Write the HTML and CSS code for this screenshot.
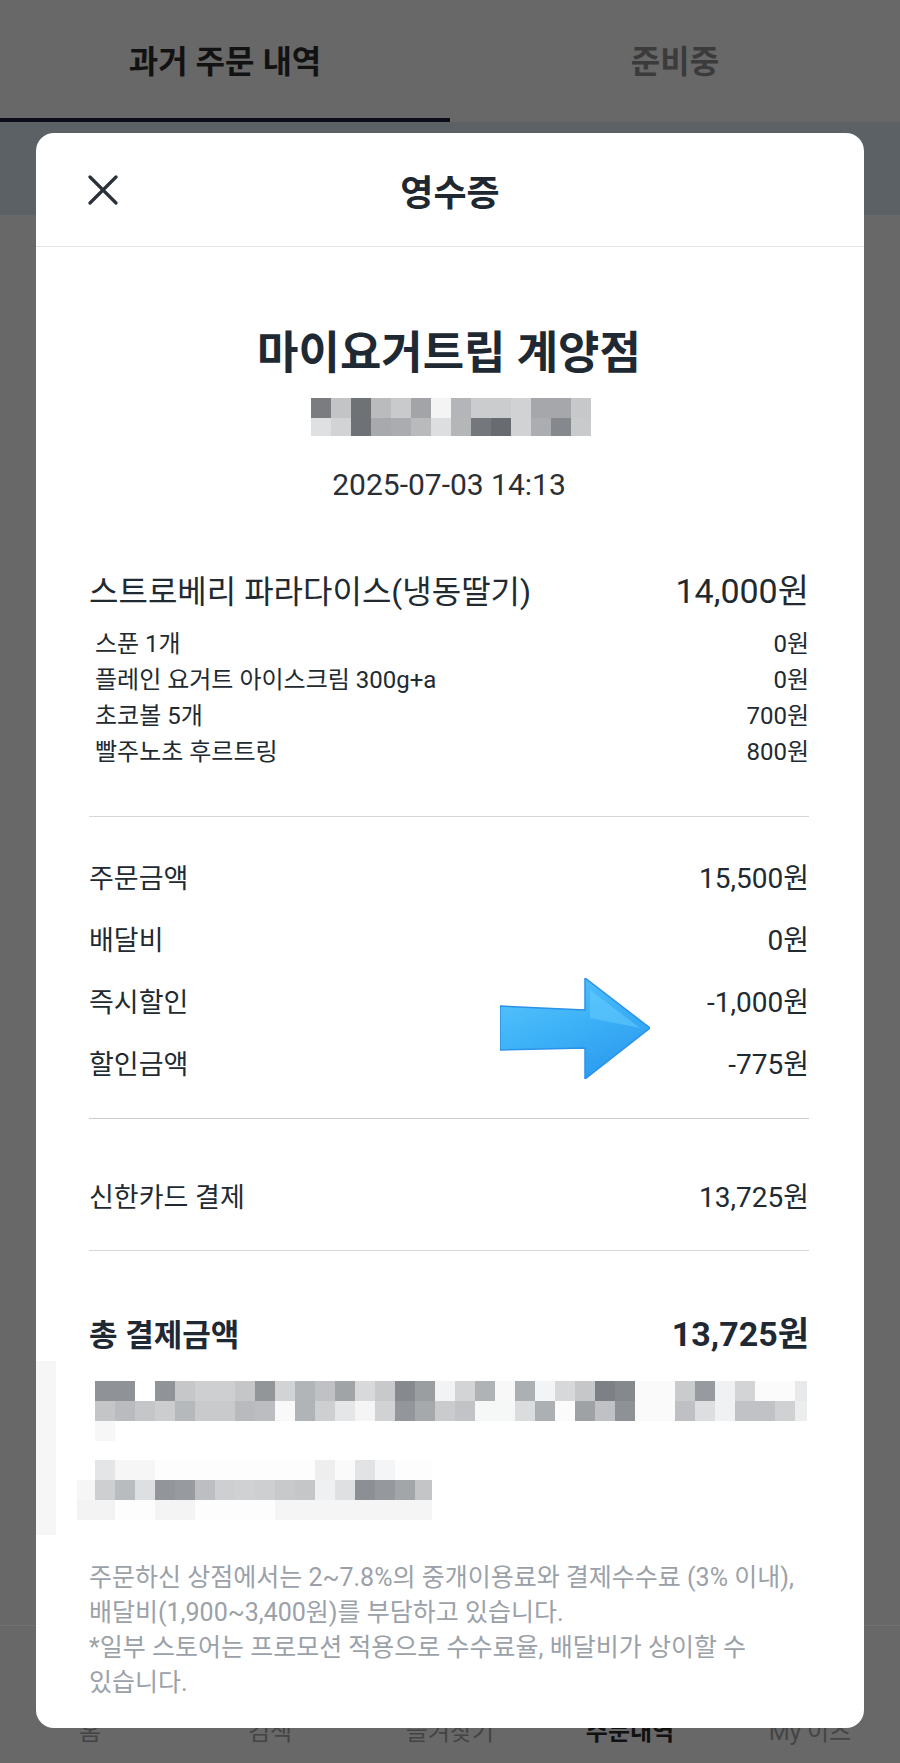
FILE: index.html
```html
<!DOCTYPE html>
<html lang="ko">
<head>
    <meta charset="UTF-8">
    <meta name="viewport" content="width=device-width, initial-scale=1.0">
    <title>영수증</title>
    <link rel="stylesheet" href="styles.css">
</head>
<body>
    <div class="app">
        <div class="tabs">
            <div class="tab active">과거 주문 내역</div>
            <div class="tab">준비중</div>
        </div>
        <div class="band"></div>
        <div class="content"></div>
        <nav class="bottom-nav">
            <span>홈</span>
            <span>검색</span>
            <span>즐겨찾기</span>
            <span class="on">주문내역</span>
            <span>My 이츠</span>
        </nav>
    </div>

    <div class="receipt">
        <header class="receipt-head">
            <button class="close" aria-label="닫기">
                <svg width="30" height="30" viewBox="0 0 30 30">
                    <path d="M2 2 L28 28 M28 2 L2 28" stroke="#2b3138" stroke-width="3.2" stroke-linecap="round" fill="none"/>
                </svg>
            </button>
            <h2>영수증</h2>
            <span></span>
        </header>

        <div class="receipt-body">
            <h1 class="store">마이요거트립 계양점</h1>
            <div class="blur-addr">
                <div class="r1"></div>
                <div class="r2"></div>
            </div>
            <p class="date">2025-07-03 14:13</p>

            <div class="menu">
                <div class="row main">
                    <span>스트로베리 파라다이스(냉동딸기)</span>
                    <span class="won">14,000원</span>
                </div>
                <div class="options">
                    <div class="row"><span>스푼 1개</span><span>0원</span></div>
                    <div class="row"><span>플레인 요거트 아이스크림 300g+a</span><span>0원</span></div>
                    <div class="row"><span>초코볼 5개</span><span>700원</span></div>
                    <div class="row"><span>빨주노초 후르트링</span><span>800원</span></div>
                </div>
            </div>

            <hr class="line first">

            <div class="sums">
                <div class="row"><span>주문금액</span><span class="won">15,500원</span></div>
                <div class="row"><span>배달비</span><span class="won">0원</span></div>
                <div class="row"><span>즉시할인</span><span class="won">-1,000원</span></div>
                <div class="row"><span>할인금액</span><span class="won">-775원</span></div>
                <svg class="arrow" width="150" height="101" viewBox="0 0 150 101">
                    <defs>
                        <linearGradient id="ag" x1="0" y1="0" x2="0.6" y2="1">
                            <stop offset="0" stop-color="#5cc6fd"/>
                            <stop offset="0.55" stop-color="#3db2f7"/>
                            <stop offset="1" stop-color="#2d9cf0"/>
                        </linearGradient>
                    </defs>
                    <polygon points="0,28 85,32 85,0 150,50 85,101 85,70 0,72" fill="url(#ag)" stroke="#2a92ea" stroke-width="1.5" stroke-linejoin="round"/>
                    <polygon points="90,12 140,50 90,40" fill="#6fd0ff" opacity="0.45"/>
                </svg>
            </div>

            <hr class="line">

            <div class="row pay"><span>신한카드 결제</span><span class="won">13,725원</span></div>

            <hr class="line">

            <div class="row total"><span>총 결제금액</span><span class="won">13,725원</span></div>

            <div class="blur-info">
                <div class="m1a"></div>
                <div class="m1b"></div>
                <div class="m1c"></div>
                <div class="m2a"></div>
                <div class="m2b"></div>
                <div class="m2c"></div>
            </div>

            <p class="notice">주문하신 상점에서는 2~7.8%의 중개이용료와 결제수수료 (3% 이내),<br>배달비(1,900~3,400원)를 부담하고 있습니다.<br>*일부 스토어는 프로모션 적용으로 수수료율, 배달비가 상이할 수<br>있습니다.</p>
        </div>
    </div>
</body>
</html>
```

FILE: styles.css
```css
* {
    box-sizing: border-box;
}
body {
    margin: 0;
    font-family: Roboto, "Noto Sans CJK KR", sans-serif;
    background: #686868;
}
.app {
    height: 1763px;
    display: flex;
    flex-direction: column;
}
.tabs {
    display: flex;
    height: 122px;
    background: #686868;
}
.tab {
    flex: 1;
    text-align: center;
    padding-top: 6px;
    line-height: 112px;
    font-size: 32px;
    font-weight: 700;
    color: #3b3b3b;
}
.tab.active {
    color: #121212;
    border-bottom: 4px solid #0b0b1a;
}
.band {
    height: 93px;
    background: #5c6166;
}
.content {
    flex: 1;
}
.bottom-nav {
    height: 138px;
    border-top: 1px solid #737373;
    display: grid;
    grid-template-columns: repeat(5, 1fr);
    padding-top: 91px;
}
.bottom-nav span {
    text-align: center;
    font-size: 24px;
    line-height: 30px;
    color: #444;
}
.bottom-nav .on {
    color: #111;
    font-weight: 700;
}

/* 영수증 모달 */
.receipt {
    position: absolute;
    left: 36px;
    top: 133px;
    width: 828px;
    height: 1595px;
    background: #fff;
    border-radius: 18px;
    overflow: hidden;
    color: #222a31;
}
.receipt-head {
    height: 114px;
    border-bottom: 1px solid #e4e4e4;
    display: grid;
    grid-template-columns: 1fr auto 1fr;
    align-items: center;
}
.receipt-head h2 {
    margin: 0;
    font-size: 36px;
    font-weight: 700;
    color: #1f2730;
}
.close {
    justify-self: start;
    margin-left: 52px;
    padding: 0;
    border: 0;
    background: none;
    width: 30px;
    height: 30px;
}
.close svg {
    display: block;
}
.receipt-body {
    padding: 0 55px 0 53px;
}
.store {
    margin: 82px 0 0;
    text-align: center;
    font-size: 45px;
    line-height: 50px;
    font-weight: 700;
    color: #1f2933;
}
.blur-addr {
    width: 280px;
    margin: 19px 0 0 222px;
}
.blur-addr .r1,
.blur-addr .r2 {
    height: 20px;
}
.blur-addr .r2 {
    height: 18px;
}
.blur-addr .r1 {
    background: linear-gradient(to right,
        #7a7c7f 0 20px, #c3c4c6 20px 40px, #6f7275 40px 60px, #b9bbbd 60px 80px,
        #c9cacc 80px 100px, #a2a4a7 100px 120px, #f4f4f5 120px 140px, #b3b5b8 140px 160px,
        #cbccce 160px 200px, #d1d2d4 200px 220px, #a5a7aa 220px 260px, #c6c8ca 260px 280px);
}
.blur-addr .r2 {
    background: linear-gradient(to right,
        #dfe0e1 0 20px, #d2d3d5 20px 40px, #6e7176 40px 60px, #a7a9ac 60px 80px,
        #aaacaf 80px 100px, #b8babc 100px 120px, #dddedf 120px 140px, #b4b6b8 140px 160px,
        #74787c 160px 180px, #686b70 180px 200px, #d1d2d4 200px 220px, #abadb0 220px 240px,
        #85888c 240px 260px, #c9cacc 260px 280px);
}
.date {
    margin: 31px 0 0;
    text-align: center;
    font-size: 30px;
    line-height: 36px;
    color: #2a2f35;
}
.row {
    display: flex;
    justify-content: space-between;
    align-items: baseline;
}
.menu {
    margin-top: 66px;
}
.row.main {
    font-size: 32px;
    line-height: 44px;
}
.row.main .won {
    font-size: 34px;
}
.options {
    margin-top: 12px;
    padding-left: 6px;
    font-size: 24px;
    line-height: 36px;
}
.line {
    margin: 46px 0 0;
    border: 0;
    border-top: 1px solid #d3d6da;
    height: 0;
}
.sums {
    position: relative;
    margin-top: 42px;
    display: flex;
    flex-direction: column;
    gap: 22px;
}
.sums .row,
.row.pay {
    font-size: 27px;
    line-height: 40px;
}
.sums .won,
.row.pay .won {
    font-size: 28px;
}
.arrow {
    position: absolute;
    left: 411px;
    top: 119px;
}
.sums + .line {
    margin-top: 33px;
    border-top-color: #c9ccd0;
}
.row.pay {
    margin-top: 59px;
}
.pay + .line {
    margin-top: 32px;
}
.row.total {
    margin-top: 61px;
    font-size: 31px;
    line-height: 44px;
    font-weight: 700;
    color: #1f2933;
}
.row.total .won {
    font-size: 34px;
}
.blur-info {
    margin: 3px 0 0 -53px;
    height: 174px;
    border-left: 20px solid #f6f6f6;
    padding: 20px 0 0 39px;
}
.blur-info div {
    height: 20px;
}
.m1a,
.m1b {
    width: 712px;
}
.m1a {
    background: linear-gradient(to right,
        #8f9296 0 40px, #ffffff 40px 60px, #909397 60px 80px, #c5c7c9 80px 100px,
        #cdcfd1 100px 140px, #c4c6c8 140px 160px, #939699 160px 180px, #d1d3d5 180px 200px,
        #b2b5b7 200px 220px, #bfc1c4 220px 240px, #a1a4a7 240px 260px, #d7d9db 260px 280px,
        #c7c9cb 280px 300px, #86898d 300px 320px, #9b9ea1 320px 340px, #f2f3f4 340px 360px,
        #d2d4d6 360px 380px, #b0b3b5 380px 400px, #f8f8f9 400px 420px, #adb0b3 420px 440px,
        #f3f4f5 440px 460px, #d6d8da 460px 480px, #c5c7c9 480px 500px, #7d8084 500px 520px,
        #85888c 520px 540px, #fafafa 540px 580px, #c9cbcd 580px 600px, #979a9e 600px 620px,
        #f0f1f2 620px 640px, #d2d4d6 640px 660px, #fbfbfb 660px 700px, #e8e9ea 700px 720px);
}
.m1b {
    background: linear-gradient(to right,
        #c3c5c7 0 20px, #b9bbbe 20px 40px, #c4c6c8 40px 60px, #cbcdcf 60px 80px,
        #b6b9bb 80px 100px, #c8cacc 100px 140px, #b8babd 140px 160px, #bbbdc0 160px 180px,
        #f9f9fa 180px 200px, #b1b4b6 200px 220px, #cdcfd1 220px 240px, #e5e6e7 240px 260px,
        #f5f5f6 260px 280px, #d0d2d4 280px 300px, #93969a 300px 320px, #a6a9ac 320px 340px,
        #c9cbcd 340px 360px, #c1c3c6 360px 380px, #f6f7f7 380px 420px, #dadcde 420px 440px,
        #adb0b3 440px 460px, #fbfbfb 460px 480px, #9fa2a5 480px 500px, #bfc1c4 500px 520px,
        #8e9195 520px 540px, #fafafa 540px 580px, #bec0c3 580px 600px, #dcdedf 600px 620px,
        #f0f1f2 620px 640px, #c0c2c5 640px 680px, #cfd1d3 680px 700px, #eceded 700px 720px);
}
.m1c {
    width: 20px;
    background: #f7f7f7;
}
.blur-info .m2a {
    width: 337px;
    margin-top: 19px;
    background: linear-gradient(to right,
        #e4e5e6 0 20px, #f6f6f6 20px 60px, #fdfdfd 60px 220px, #eeeeef 220px 240px,
        #fafafa 240px 260px, #e2e3e4 260px 280px, #f4f5f6 280px 300px, #fdfdfd 300px 337px);
}
.m2b,
.m2c {
    margin-left: -18px;
    width: 355px;
}
.m2b {
    background: linear-gradient(to right,
        #f6f6f6 0 18px, #cdcfd1 18px 38px, #b9bcbe 38px 58px, #dddfe0 58px 78px,
        #929599 78px 98px, #979a9e 98px 118px, #bcbec1 118px 138px, #cdcfd1 138px 158px,
        #cfd1d3 158px 178px, #cdcfd1 178px 198px, #c7c9cb 198px 218px, #c4c6c8 218px 238px,
        #eff0f1 238px 258px, #dfe0e2 258px 278px, #8c8f93 278px 298px, #95989c 298px 318px,
        #a3a6a9 318px 338px, #c3c5c7 338px 355px);
}
.m2c {
    background: linear-gradient(to right,
        #f3f3f4 0 38px, #fdfdfd 38px 78px, #f4f4f5 78px 118px, #fdfdfd 118px 198px,
        #f5f5f6 198px 355px);
}
.notice {
    margin: 25px 0 0;
    font-size: 25px;
    line-height: 35px;
    white-space: nowrap;
    color: #9ba1a8;
}
```
